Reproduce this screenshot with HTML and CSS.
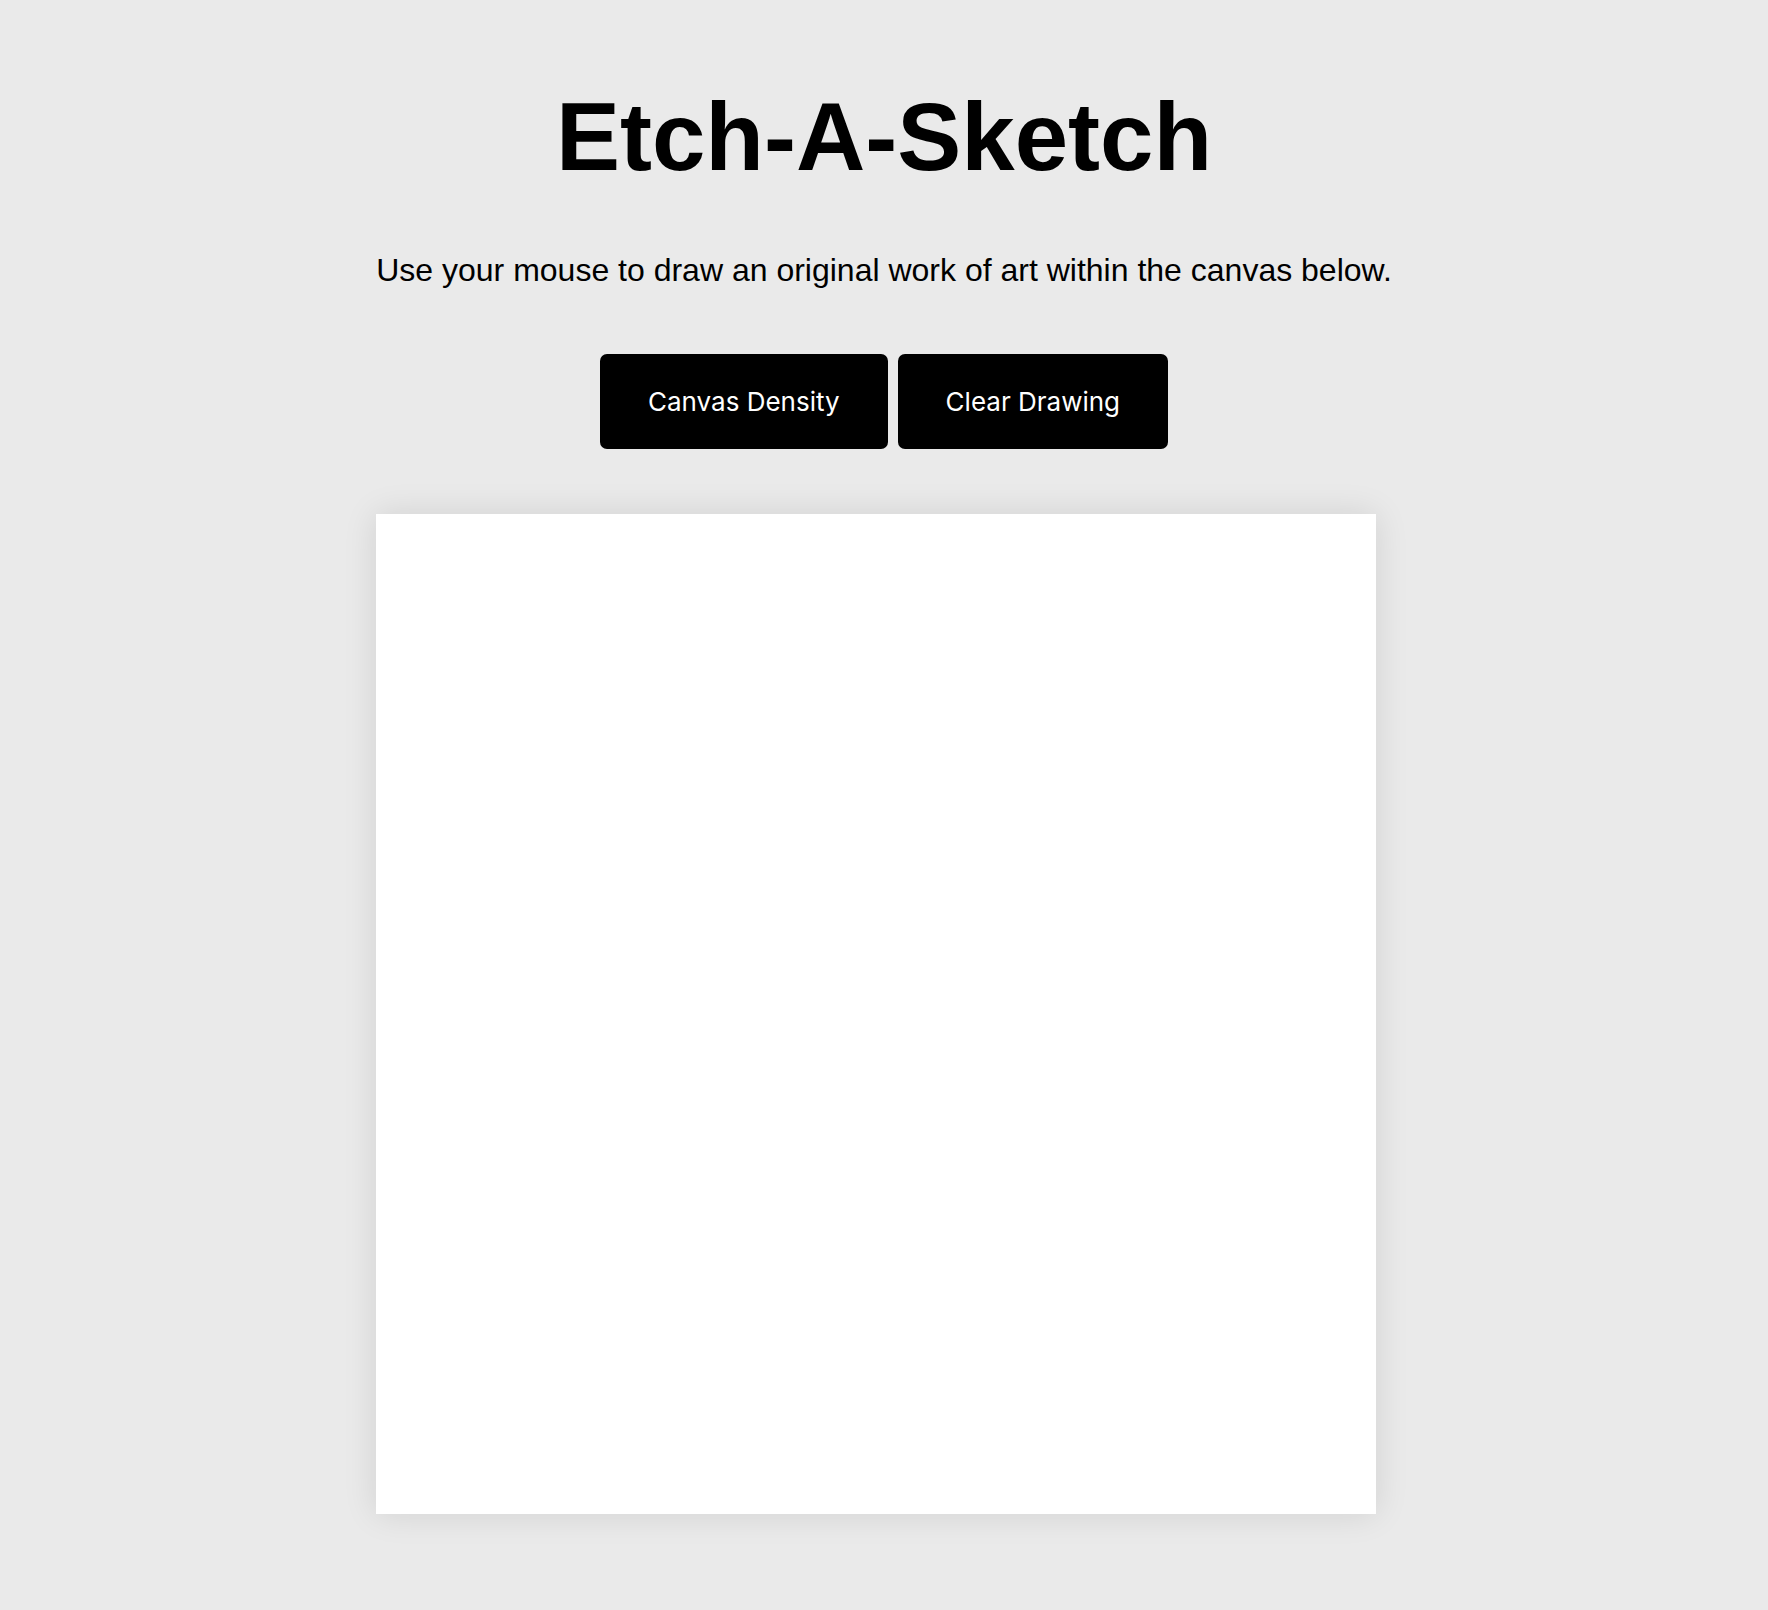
FILE: index.html
```html
<!DOCTYPE html>
<html lang="en">
<head>
<meta charset="utf-8">
<title>Etch-A-Sketch</title>
<link rel="stylesheet" href="styles.css">
</head>
<body>
<main class="page">
  <h1 class="title">Etch-A-Sketch</h1>
  <p class="subtitle">Use your mouse to draw an original work of art within the canvas below.</p>
  <div class="controls">
    <button class="btn">Canvas Density</button>
    <button class="btn">Clear Drawing</button>
  </div>
  <div class="canvas-wrap">
    <div class="canvas"></div>
  </div>
</main>
</body>
</html>
```
FILE: styles.css
```css
html, body {
  margin: 0;
  padding: 0;
  background: #eaeaea;
}
body {
  font-family: "Liberation Sans", Arial, Helvetica, sans-serif;
  color: #000;
}
.page {
  display: flex;
  flex-direction: column;
  align-items: center;
  padding-top: 89px;
  padding-bottom: 96px;
}
.title {
  margin: 0;
  font-size: 96px;
  line-height: 96px;
  font-weight: 700;
  letter-spacing: 0;
}
.subtitle {
  margin: 67px 0 0;
  font-size: 32px;
  line-height: 36px;
}
.controls {
  margin-top: 66px;
  display: flex;
  gap: 10px;
}
.btn {
  font-family: Inter, "Noto Sans", sans-serif;
  font-size: 26px;
  color: #fff;
  background: #000;
  border: none;
  border-radius: 7px;
  height: 95px;
  padding: 0 48px;
}
.canvas-wrap {
  margin-top: 65px;
  width: 1016px;
}
.canvas {
  width: 1000px;
  height: 1000px;
  background: #fff;
  box-shadow: 0 0 32px rgba(0, 0, 0, 0.11);
}
```
